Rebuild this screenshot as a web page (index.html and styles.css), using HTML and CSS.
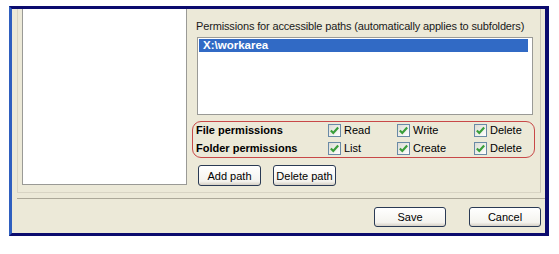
FILE: index.html
```html
<!DOCTYPE html>
<html lang="en">
  <head>
    <meta charset="utf-8">
    <title>Permissions</title>
    <link rel="stylesheet" href="styles.css">
  </head>
  <body>
    <div class="window">
      <div class="top-panel">
        <div class="user-list"></div>
        <div class="perm-col">
          <div class="perm-caption">Permissions for accessible paths (automatically applies to subfolders)</div>
          <div class="path-list">
            <div class="path-item selected">X:\workarea</div>
          </div>
          <div class="perm-box">
            <div class="perm-row">
              <span class="perm-name">File permissions</span>
              <span class="check c1"><i class="box"><svg viewBox="0 0 9 9"><path d="M1.5 4.5 L3.5 6.5 L7.5 2" /></svg></i>Read</span>
              <span class="check c2"><i class="box"><svg viewBox="0 0 9 9"><path d="M1.5 4.5 L3.5 6.5 L7.5 2" /></svg></i>Write</span>
              <span class="check c3"><i class="box"><svg viewBox="0 0 9 9"><path d="M1.5 4.5 L3.5 6.5 L7.5 2" /></svg></i>Delete</span>
            </div>
            <div class="perm-row">
              <span class="perm-name">Folder permissions</span>
              <span class="check c1"><i class="box"><svg viewBox="0 0 9 9"><path d="M1.5 4.5 L3.5 6.5 L7.5 2" /></svg></i>List</span>
              <span class="check c2"><i class="box"><svg viewBox="0 0 9 9"><path d="M1.5 4.5 L3.5 6.5 L7.5 2" /></svg></i>Create</span>
              <span class="check c3"><i class="box"><svg viewBox="0 0 9 9"><path d="M1.5 4.5 L3.5 6.5 L7.5 2" /></svg></i>Delete</span>
            </div>
          </div>
          <div class="path-buttons">
            <button class="xp-btn add-btn">Add path</button>
            <button class="xp-btn del-btn">Delete path</button>
          </div>
        </div>
      </div>
      <div class="footer">
        <button class="xp-btn foot-btn">Save</button>
        <button class="xp-btn foot-btn">Cancel</button>
      </div>
    </div>
  </body>
</html>
```

FILE: styles.css
```css
body {
  margin: 0;
  padding: 6px 0 0 9px;
  background: #ffffff;
  font-family: "Liberation Sans", Arial, sans-serif;
  font-size: 11px;
  color: #000000;
}

.window {
  width: 533px;
  height: 224px;
  border-top: 3px solid #0b0b6e;
  border-left: 3px solid #2f5fbf;
  border-right: 4px solid #0b0b6e;
  border-bottom: 3px solid #0b0b6e;
  background: #ece9d8;
  display: flex;
  flex-direction: column;
}

.top-panel {
  display: flex;
  margin-left: 5px;
  width: 524px;
  height: 184px;
  border-left: 1px solid #d8d4c4;
  border-right: 1px solid #c8c4b4;
  border-bottom: 1px solid #d8d4c4;
  padding: 0 5px 0 4px;
  box-sizing: border-box;
}

.user-list {
  width: 165px;
  height: 176px;
  box-sizing: border-box;
  background: #ffffff;
  border: 1px solid #9a9a96;
  border-top: none;
}

.perm-col {
  margin-left: 5px;
  width: 343px;
  display: flex;
  flex-direction: column;
}

.perm-caption {
  margin: 10px 0 0 4px;
  height: 14px;
  line-height: 14px;
  white-space: nowrap;
  letter-spacing: -0.15px;
  color: #1a1a1a;
}

.path-list {
  margin: 4px 0 0 5px;
  width: 336px;
  height: 78px;
  box-sizing: border-box;
  background: #ffffff;
  border: 1px solid #9a9a96;
  padding: 1px;
}

.path-item {
  height: 13px;
  line-height: 13px;
  padding-left: 4px;
  font-weight: bold;
  font-size: 11.5px;
}

.path-item.selected {
  background: #316ac5;
  color: #ffffff;
  margin-right: 3px;
}

.perm-box {
  margin-top: 6px;
  height: 37px;
  box-sizing: border-box;
  border: 1px solid #c84848;
  border-radius: 9px;
  padding: 1px 0 0 3px;
  display: flex;
  flex-direction: column;
  gap: 4px;
}

.perm-row {
  display: flex;
  align-items: center;
  height: 14px;
}

.perm-name {
  width: 132px;
  font-weight: bold;
  white-space: nowrap;
}

.check {
  display: flex;
  align-items: center;
  gap: 3px;
}

.c1 { width: 69px; }
.c2 { width: 77px; }

.box {
  display: inline-block;
  width: 11px;
  height: 11px;
  border: 1px solid #6a8aa6;
  background: linear-gradient(135deg, #dcdcd4, #ffffff);
}

.box svg {
  display: block;
  width: 11px;
  height: 11px;
  fill: none;
  stroke: #3a9e3a;
  stroke-width: 1.8;
}

.path-buttons {
  display: flex;
  gap: 12px;
  margin: 7px 0 0 6px;
}

.xp-btn {
  font-family: "Liberation Sans", Arial, sans-serif;
  font-size: 11px;
  color: #000000;
  height: 21px;
  padding: 0;
  white-space: nowrap;
  border: 1px solid #2a3a54;
  border-radius: 3px;
  background: linear-gradient(#ffffff, #f4f3ee 80%, #d6d0c5);
}

.add-btn { width: 63px; }
.del-btn { width: 63px; }

.footer {
  margin: 5px 0 0 5px;
  border-top: 1px solid #aca899;
  flex: 1;
  display: flex;
  justify-content: flex-end;
  align-items: flex-start;
  gap: 23px;
  padding: 8px 4px 0 0;
}

.foot-btn {
  width: 72px;
  height: 20px;
}
```
